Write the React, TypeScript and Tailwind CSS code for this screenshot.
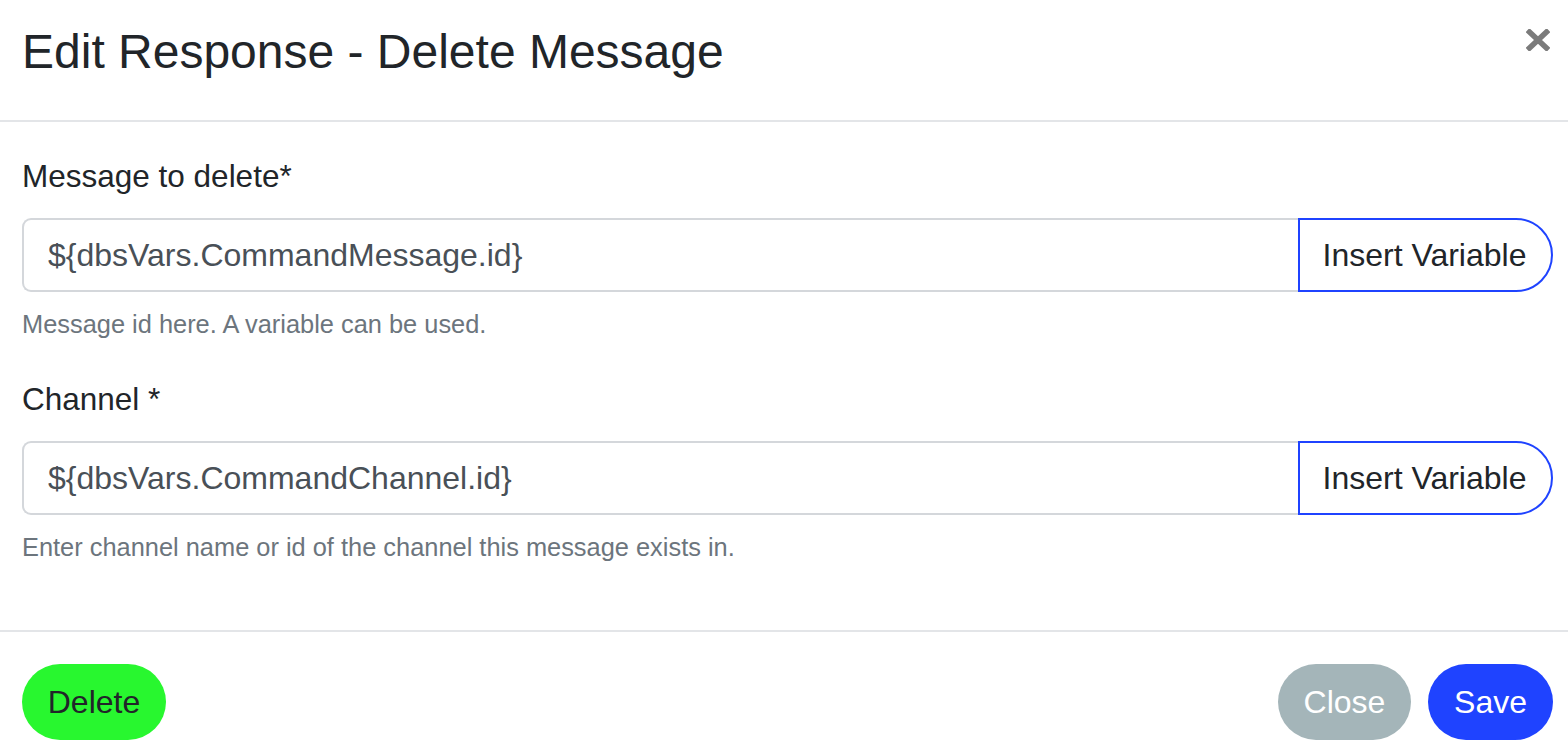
const fieldFont = { fontFamily: '"Liberation Sans", Arial, sans-serif' };

const VariableField = ({
  label,
  value,
  help,
}: {
  label: string;
  value: string;
  help: string;
}) => {
  return (
    <div className="mb-[32px]">
      <label className="mb-[18px] block text-[31.5px] leading-[48px] text-[#212529]">
        {label}
      </label>
      <div className="flex h-[74px] w-full">
        <input
          title="null"
          readOnly
          value={value}
          className="h-full min-w-0 flex-1 rounded-l-[9px] border-2 border-r-0 border-[#d4d7db] bg-white px-[24px] text-[32px] text-[#495057] outline-none"
          style={fieldFont}
        />
        <button className="h-full w-[255px] shrink-0 rounded-r-[37px] border-2 border-[#1f43ff] bg-white pr-[2px] text-[32px] text-[#212529]">
          Insert Variable
        </button>
      </div>
      <p className="mt-[13px] text-[25.4px] leading-[38px] text-[#6c757d]">
        {help}
      </p>
    </div>
  );
};

export default function App() {
  return (
    <div className="min-h-screen w-full bg-white" style={fieldFont}>
      <div className="flex items-start justify-between border-b-2 border-[#e3e5e8] pt-[23px] pr-[15px] pb-[39px] pl-[22px]">
        <h4 className="text-[48px] leading-[58px] font-normal text-[#212529]">
          Edit Response - Delete Message
        </h4>
        <button className="mt-[4px] mr-[2px] flex h-[26px] w-[26px] items-center justify-center">
          <svg width="24" height="22" viewBox="0 0 24 22">
            <path
              d="M3.5 3 L20.5 19 M20.5 3 L3.5 19"
              stroke="#7b7b7b"
              strokeWidth="5.5"
              strokeLinecap="square"
            />
          </svg>
        </button>
      </div>

      <div className="pt-[30px] pr-[15px] pb-[32px] pl-[22px]">
        <VariableField
          label="Message to delete*"
          value="${dbsVars.CommandMessage.id}"
          help="Message id here. A variable can be used."
        />
        <VariableField
          label="Channel *"
          value="${dbsVars.CommandChannel.id}"
          help="Enter channel name or id of the channel this message exists in."
        />
      </div>

      <div className="flex items-center justify-between border-t-2 border-[#e3e5e8] pt-[32px] pr-[15px] pb-[16px] pl-[22px]">
        <button className="h-[76px] w-[144px] rounded-full bg-[#28f72f] text-[32px] text-[#212529]">
          Delete
        </button>
        <div className="flex items-center gap-[17px]">
          <button className="h-[76px] w-[133px] rounded-full bg-[#a4b5b9] text-[32px] text-white">
            Close
          </button>
          <button className="h-[76px] w-[125px] rounded-full bg-[#1f43ff] text-[32px] text-white">
            Save
          </button>
        </div>
      </div>
    </div>
  );
}
